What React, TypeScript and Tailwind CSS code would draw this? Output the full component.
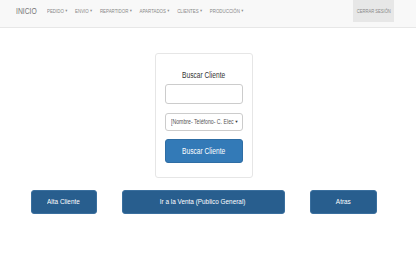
import React from "react";

const font = { fontFamily: '"Liberation Sans", Arial, sans-serif' };

function Caret() {
  return <span className="ml-[1px] text-[4px] align-middle">▼</span>;
}

export default function App() {
  const items = ["PEDIDO", "ENVIO", "REPARTIDOR", "APARTADOS", "CLIENTES", "PRODUCCIÓN"];
  return (
    <div className="w-[416px] h-[260px] bg-white overflow-hidden" style={font}>
      <div className="h-[28px] bg-[#f8f8f8] border-b border-[#e7e7e7] flex items-start relative">
        <div className="pl-[16px] h-[22px] flex items-center text-[8.5px] text-[#777]">
          <span className="inline-block scale-x-[0.8] origin-left">INICIO</span>
        </div>
        <div className="absolute left-[47px] top-0 h-[22px] flex items-center gap-[9px] text-[5.5px] text-[#888] scale-x-[0.8] origin-left">
          {items.map((i) => (
            <span key={i} className="whitespace-nowrap">
              {i}
              <Caret />
            </span>
          ))}
        </div>
        <div className="ml-auto mr-[22px] w-[41px] h-[22px] bg-[#e7e7e7] flex items-center justify-center text-[5.5px] text-[#888] whitespace-nowrap">
          <span className="inline-block scale-x-[0.75]">CERRAR SESIÓN</span>
        </div>
      </div>

      <div className="w-[407px] flex flex-col items-center">
        <div className="mt-[25px] w-[98px] border border-[#e6e6e6] rounded-[3px] px-[9px] pt-[15px] pb-[14px] flex flex-col">
          <div className="h-[12px] flex items-center justify-center text-[8.5px] text-[#333] leading-none whitespace-nowrap">
            <span className="inline-block scale-x-[0.78]">Buscar Cliente</span>
          </div>
          <div className="mt-[3px] h-[20px] border border-[#ccc] rounded-[3px] bg-white"></div>
          <div className="mt-[9px] h-[18px] border border-[#ccc] rounded-[3px] bg-white flex items-center pl-[5px] pr-[3px] text-[6.5px] text-[#555] relative">
            <span className="whitespace-nowrap inline-block scale-x-[0.8] origin-left">[Nombre- Teléfono- C. Elec</span>
            <span className="absolute right-[3px] text-[4px] text-[#333]">▼</span>
          </div>
          <div className="mt-[8px] h-[24px] bg-[#337ab7] border border-[#2e6da4] rounded-[3px] flex items-center justify-center text-[8.5px] text-white whitespace-nowrap">
            <span className="inline-block scale-x-[0.78]">Buscar Cliente</span>
          </div>
        </div>

        <div className="mt-[12px] w-full flex items-center justify-center gap-[25px] text-[8px] text-white whitespace-nowrap">
          <div className="w-[66px] h-[24px] bg-[#285e8e] border border-[#3a6f9e] rounded-[3px] flex items-center justify-center">
            <span className="inline-block scale-x-[0.8]">Alta Cliente</span>
          </div>
          <div className="w-[163px] h-[24px] bg-[#285e8e] border border-[#3a6f9e] rounded-[3px] flex items-center justify-center">
            <span className="inline-block scale-x-[0.8]">Ir a la Venta (Publico General)</span>
          </div>
          <div className="w-[67px] h-[24px] bg-[#285e8e] border border-[#3a6f9e] rounded-[3px] flex items-center justify-center">
            <span className="inline-block scale-x-[0.8]">Atras</span>
          </div>
        </div>
      </div>
    </div>
  );
}
